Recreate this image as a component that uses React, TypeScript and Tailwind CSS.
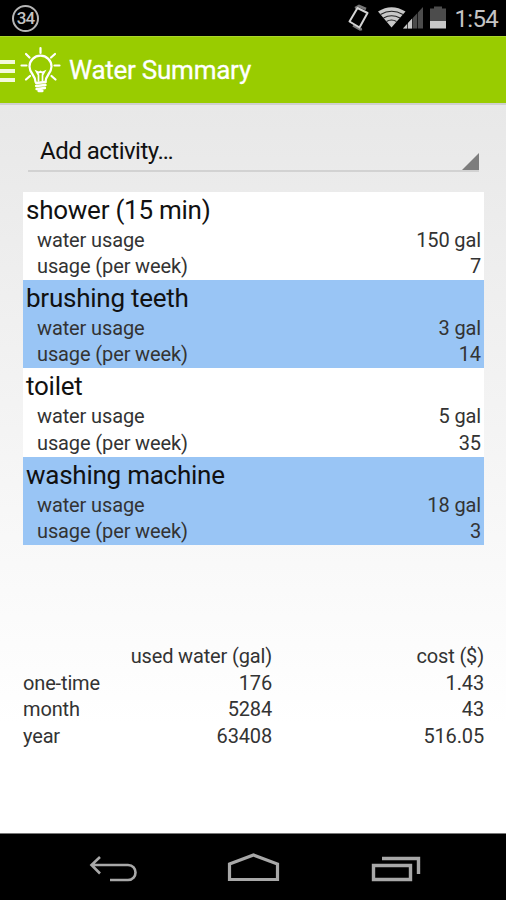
type Activity = {
  name: string;
  usage: string;
  perWeek: number;
};

const activities: Activity[] = [
  { name: "shower (15 min)", usage: "150 gal", perWeek: 7 },
  { name: "brushing teeth", usage: "3 gal", perWeek: 14 },
  { name: "toilet", usage: "5 gal", perWeek: 35 },
  { name: "washing machine", usage: "18 gal", perWeek: 3 },
];

const totals = [
  { label: "one-time", water: "176", cost: "1.43" },
  { label: "month", water: "5284", cost: "43" },
  { label: "year", water: "63408", cost: "516.05" },
];

const StatusBar = () => (
  <div className="h-9 shrink-0 bg-black flex items-center justify-between pl-3 pr-2 text-[#c4c4c4]">
    <div className="w-[27px] h-[27px] rounded-full border-2 border-[#b5b5b5] flex items-center justify-center text-[17px] leading-none tracking-[-1px] font-medium">
      34
    </div>
    <svg className="ml-auto" width="100" height="36" viewBox="348 0 100 36" fill="none">
      {/* rotation */}
      <path d="M356 8 L360 6 L367 9 M363 29 L361 29.5 L354 25.5" stroke="#777" strokeWidth="2.5" />
      <path d="M358.5 8 L368.5 13 L360.5 27.5 L350.5 21.5 Z" stroke="#d4d4d4" strokeWidth="2" strokeLinejoin="round" />
      {/* wifi */}
      <path d="M379 11.5 Q392.5 3 406.5 11.5 L392.5 27.5 Z" fill="#c8c8c8" />
      <path d="M381.5 14.5 Q392.5 8 404 14.5 M384.5 18 Q392.5 13.5 401 18 M387.5 21.5 Q392.5 18.5 397.5 21.5" stroke="#222" strokeWidth="1.1" />
      {/* signal */}
      <path d="M404 28.5 L424 7 V28.5 Z" fill="#4c4c4c" />
      <path d="M404 28.5 L413.5 18 V28.5 Z" fill="#c8c8c8" />
      <path d="M408.5 10 V29 M413.5 10 V29 M418.5 9 V29" stroke="#000" strokeWidth="0.7" />
      {/* battery */}
      <path d="M431 8.5 H435 V6.5 H443 V8.5 H447 V21 H431 Z" fill="#4c4c4c" />
      <path d="M431 21 H447 V28.5 H431 Z" fill="#c8c8c8" />
    </svg>
    <span className="ml-2 text-[24px] leading-9 pt-0.5 tracking-[-0.7px]">1:54</span>
  </div>
);

const Bulb = () => (
  <svg
    width="42"
    height="48"
    viewBox="0 0 42 48"
    fill="none"
    stroke="#fff"
    strokeWidth="2.2"
    strokeLinecap="round"
  >
    <path d="M20.5 2 V7 M6 8 L9.5 11.5 M35 8 L31 11.5 M1.5 19.5 H6.5 M34.5 19.5 H39.5 M6 33.5 L10 30 M35.5 33.5 L31.5 30" />
    <path d="M15.5 36 C15.5 29 9.5 27.5 9.5 20.5 A11 10.8 0 0 1 31.5 20.5 C31.5 27.5 25.5 29 25.5 36" />
    <path d="M18.5 35 V29 L16.5 25.5 L19 26.5 L20.5 25.5 L22 26.5 L24.5 25.5 L22.5 29 V35" strokeWidth="1.7" />
    <path d="M16 37 L25.5 36 M16 40 L25.5 39 M16.5 43 L25 42 M18.5 45 H22.5" strokeWidth="2.3" />
  </svg>
);

const ActionBar = () => (
  <div className="h-[67px] shrink-0 bg-[#99cc00] border-t border-[#a9d62a] flex items-center">
    <div className="flex flex-col gap-[5px] w-[15px] mt-px">
      <span className="h-[4px] bg-[#f3fadc]" />
      <span className="h-[4px] bg-[#f3fadc]" />
      <span className="h-[4px] bg-[#f3fadc]" />
    </div>
    <div className="ml-[5px]">
      <Bulb />
    </div>
    <h1 className="ml-[7px] text-[26px] leading-8 text-white tracking-[-0.25px] [-webkit-text-stroke:0.3px_white]">
      Water Summary
    </h1>
  </div>
);

const ActivityRow = ({ activity, odd }: { activity: Activity; odd: boolean }) => (
  <div className={`h-[88.4px] px-[3px] ${odd ? "bg-[#99c5f5]" : "bg-white"}`}>
    <h2 className="pt-px text-[26px] leading-[35px] tracking-[-0.25px] text-[#111]">
      {activity.name}
    </h2>
    <div className="-mt-px pl-[11px] text-[20px] leading-[26.6px] tracking-[-0.12px] text-[#333]">
      <div className="flex justify-between">
        <span>water usage</span>
        <span>{activity.usage}</span>
      </div>
      <div className="flex justify-between">
        <span>usage (per week)</span>
        <span>{activity.perWeek}</span>
      </div>
    </div>
  </div>
);

const NavBar = () => (
  <div className="h-[67px] shrink-0 bg-black border-t border-[#777]">
    <svg width="506" height="66" viewBox="0 834 506 66" fill="none" stroke="#a8a8a8">
      <path d="M100 857 L91.5 865 L100 873.5 M92 865 H128 C138 865 138 880 128 880 H110" strokeWidth="2.6" />
      <path d="M229.5 864 L253.5 855 L277.5 864 V879.5 H229.5 Z" strokeWidth="3.2" />
      <path d="M373.5 865.5 H410.5 V879.5 H373.5 Z M382 858.5 H418.5 V874" strokeWidth="3.4" />
    </svg>
  </div>
);

const App = () => {
  return (
    <div className="w-[506px] h-[900px] flex flex-col overflow-hidden font-['Roboto',sans-serif]">
      <StatusBar />
      <ActionBar />
      <main className="flex-1 min-h-0 pl-[23px] pr-[22px] bg-linear-to-b from-[#e8e8e8] to-white to-85% border-t-2 border-[#cfcfcf]">
        <div className="ml-[5px] mr-[5px] mt-[25px] h-[42px] border-b-2 border-[#d2d2d2] flex items-center justify-between">
          <span className="pl-3 pt-0.5 text-[24px] leading-8 tracking-[-0.5px] text-[#111]">
            Add activity…
          </span>
          <svg className="self-end" width="17" height="17" viewBox="0 0 17 17">
            <path d="M17 0 V17 H0 Z" fill="#7d7d7d" />
          </svg>
        </div>
        <div className="mt-[19.5px]">
          {activities.map((activity, index) => (
            <ActivityRow key={activity.name} activity={activity} odd={index % 2 === 1} />
          ))}
        </div>
        <table className="mt-[97.9px] w-full text-[20px] leading-[26.7px] tracking-[-0.15px] text-[#333]">
          <thead>
            <tr>
              <th className="w-[90px] p-0" />
              <th className="w-[159px] p-0 text-right font-normal">used water (gal)</th>
              <th className="p-0 text-right font-normal">cost ($)</th>
            </tr>
          </thead>
          <tbody>
            {totals.map((total) => (
              <tr key={total.label}>
                <td className="p-0">{total.label}</td>
                <td className="p-0 text-right">{total.water}</td>
                <td className="p-0 text-right">{total.cost}</td>
              </tr>
            ))}
          </tbody>
        </table>
      </main>
      <NavBar />
    </div>
  );
};

export default App;
